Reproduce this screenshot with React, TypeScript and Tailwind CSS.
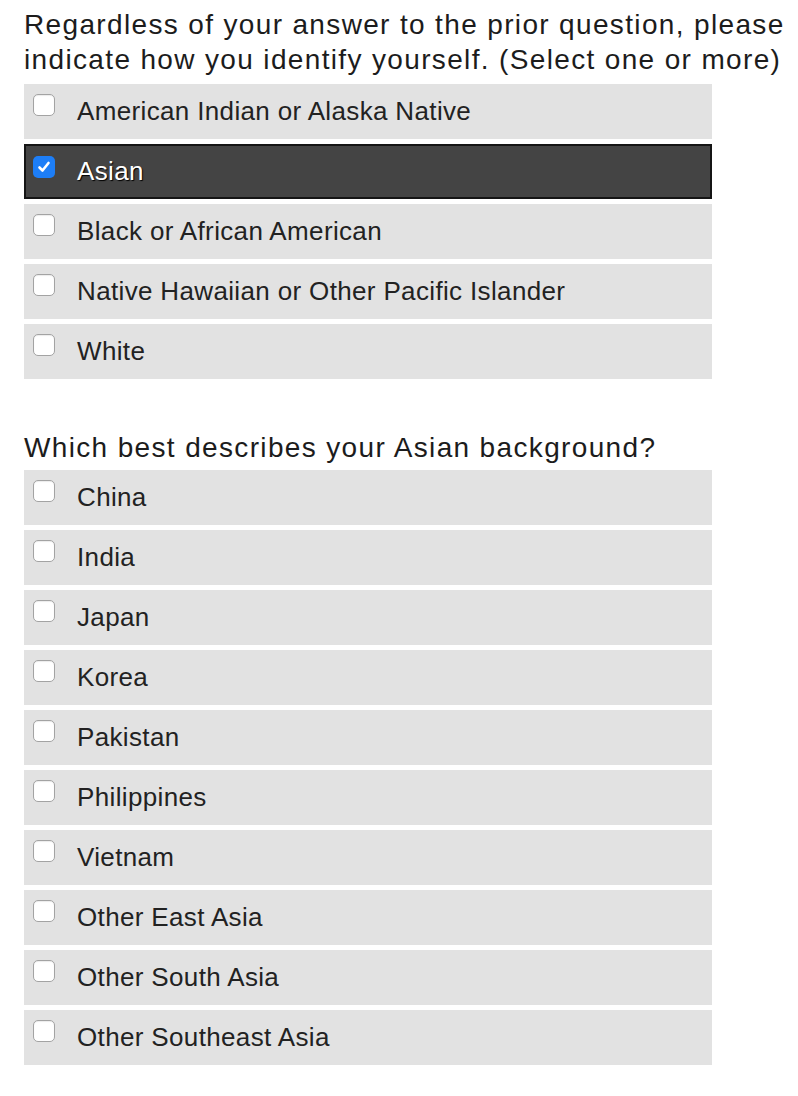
import { useState } from "react";

const races = [
  "American Indian or Alaska Native",
  "Asian",
  "Black or African American",
  "Native Hawaiian or Other Pacific Islander",
  "White",
];

const asian = [
  "China",
  "India",
  "Japan",
  "Korea",
  "Pakistan",
  "Philippines",
  "Vietnam",
  "Other East Asia",
  "Other South Asia",
  "Other Southeast Asia",
];

const Box = ({ checked }: { checked: boolean }) =>
  checked ? (
    <span className="mt-[10px] flex h-[22px] w-[22px] shrink-0 items-center justify-center rounded-[5px] bg-[#1d7ef7]">
      <svg width="14" height="14" viewBox="0 0 14 14" fill="none">
        <path d="M2.5 7.5 L5.5 10.5 L11.5 3" stroke="white" strokeWidth="2.6" strokeLinecap="round" strokeLinejoin="round" />
      </svg>
    </span>
  ) : (
    <span className="mt-[10px] h-[22px] w-[22px] shrink-0 rounded-[5px] border border-[#a3a3a3] bg-white shadow-[inset_0_1px_1px_rgba(0,0,0,0.08)]"></span>
  );

const Option = ({ label, checked, onToggle }: { label: string; checked: boolean; onToggle: () => void }) => (
  <button
    type="button"
    onClick={onToggle}
    className={
      "flex h-[55px] w-[688px] items-start text-left " +
      (checked ? "border-2 border-[#151515] bg-[#444444] pl-[7px]" : "bg-[#e2e2e2] pl-[9px]")
    }
  >
    <Box checked={checked} />
    <span
      className={
        "ml-[22px] self-center text-[26px] leading-[29px] tracking-[0.35px] " +
        (checked ? "text-white [text-shadow:1px_1px_1px_#000]" : "text-[#222]")
      }
    >
      {label}
    </span>
  </button>
);

export default function App() {
  const [picked, setPicked] = useState<string[]>(["Asian"]);
  const toggle = (v: string) =>
    setPicked((p) => (p.includes(v) ? p.filter((x) => x !== v) : [...p, v]));

  return (
    <div className="min-h-[1096px] bg-white px-[24px] pt-[7px] font-['Liberation_Sans',Arial,sans-serif]">
      <h2 className="-mr-[20px] text-[28px] leading-[35px] tracking-[1.35px] text-[#1c1c1c]">
        Regardless of your answer to the prior question, please indicate how you identify yourself. (Select one or more)
      </h2>
      <div className="mt-[7px] flex flex-col gap-[5px]">
        {races.map((r) => (
          <Option key={r} label={r} checked={picked.includes(r)} onToggle={() => toggle(r)} />
        ))}
      </div>

      <h2 className="mt-[51px] text-[28px] leading-[35px] tracking-[1.35px] text-[#1c1c1c]">
        Which best describes your Asian background?
      </h2>
      <div className="mt-[5px] flex flex-col gap-[5px]">
        {asian.map((r) => (
          <Option key={r} label={r} checked={picked.includes(r)} onToggle={() => toggle(r)} />
        ))}
      </div>
    </div>
  );
}
